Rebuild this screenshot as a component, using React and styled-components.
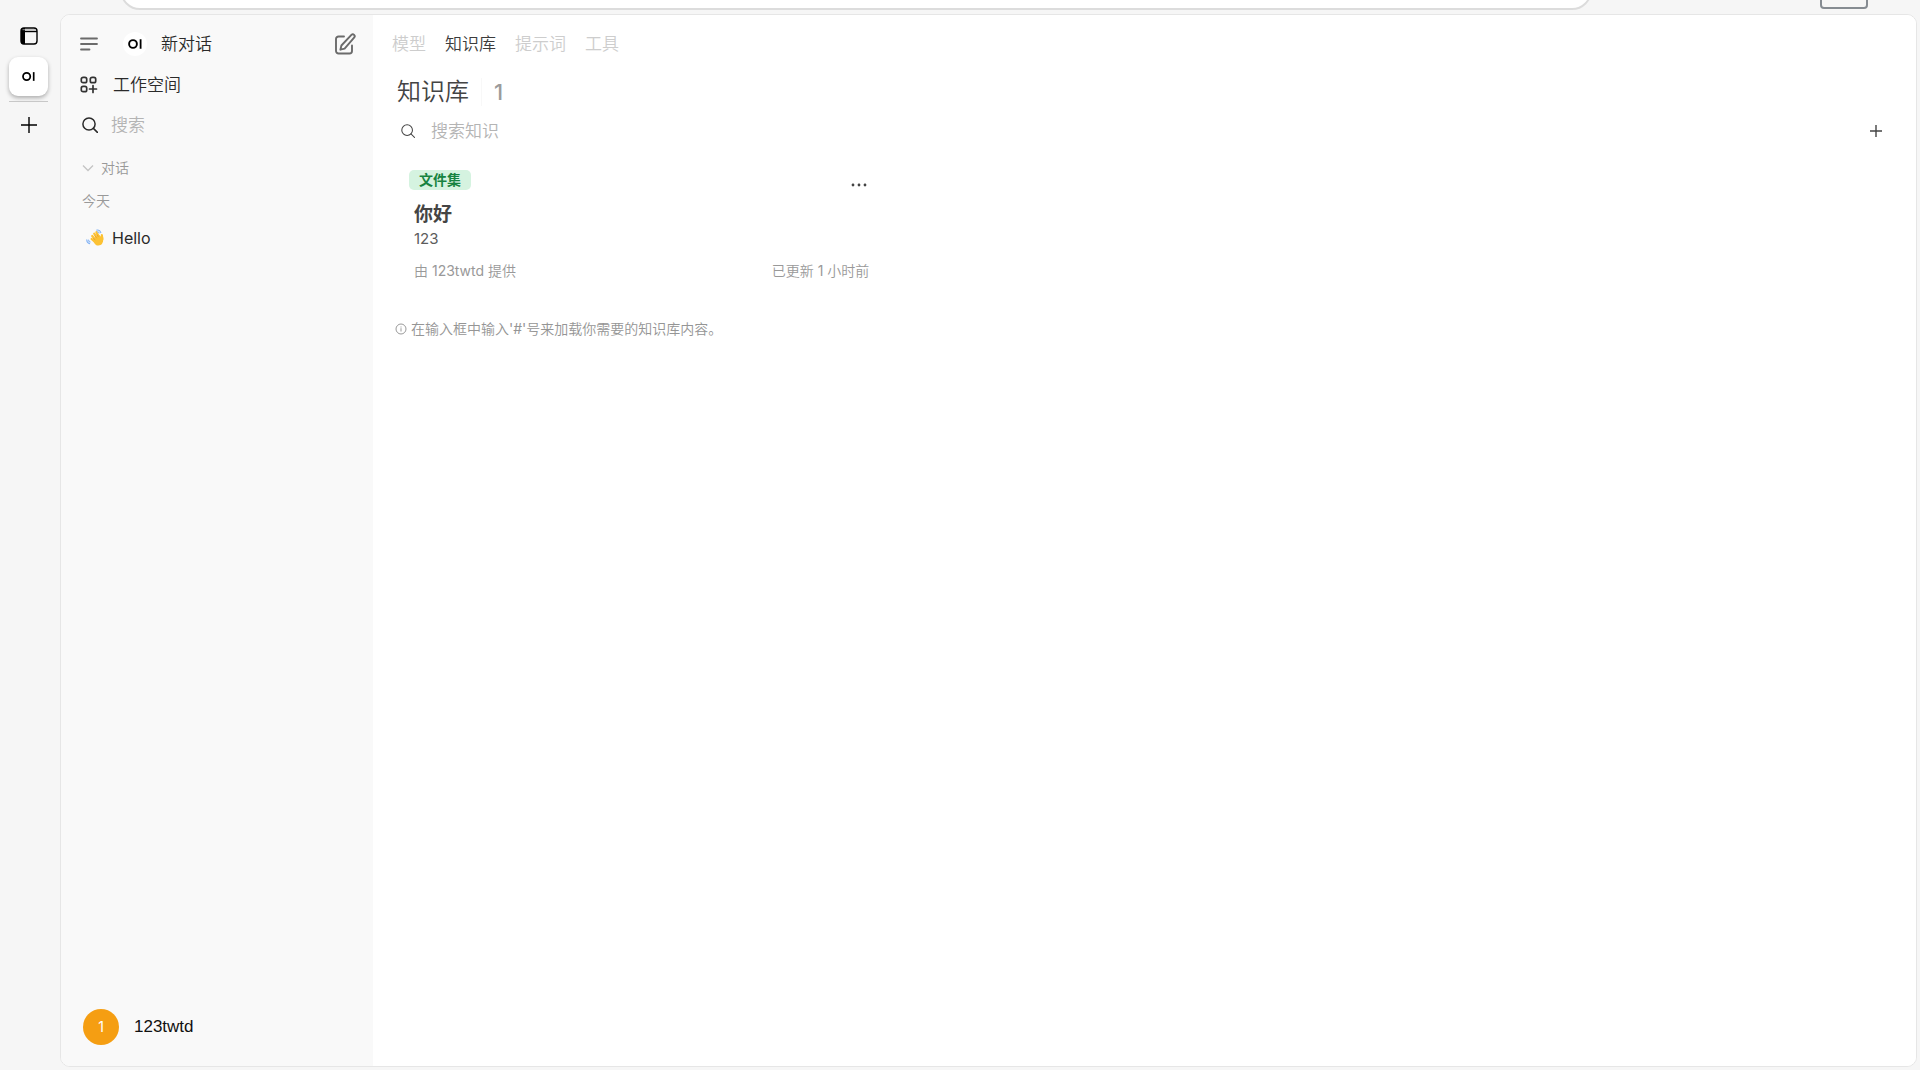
import React from "react";
import styled, { createGlobalStyle } from "styled-components";

const tabs = ["模型", "知识库", "提示词", "工具"];

const collections = [
    {
        type: "文件集",
        name: "你好",
        description: "123",
        owner: "由 123twtd 提供",
        updated: "已更新 1 小时前",
    },
];

function PanelIcon() {
    return (
        <Svg width="18" height="18" viewBox="0 0 18 18">
            <rect x="1" y="1" width="16" height="16" rx="3" stroke="#000" strokeWidth="1.4" fill="none" />
            <path d="M1 4a3 3 0 0 1 3-3h1v16H4a3 3 0 0 1-3-3z" fill="#000" />
            <path d="M4 4.5h13" stroke="#000" strokeWidth="1.4" />
            <path d="M2.5 2.7h13" stroke="#aaa" strokeWidth=".8" />
        </Svg>
    );
}

function PlusIcon({ size, weight }) {
    const mid = size / 2;
    return (
        <Svg width={size} height={size} viewBox={`0 0 ${size} ${size}`}>
            <path d={`M${mid} 0v${size}M0 ${mid}h${size}`} stroke="currentColor" strokeWidth={weight} />
        </Svg>
    );
}

function SearchIcon({ size, weight }) {
    return (
        <Svg width={size} height={size} viewBox="0 0 16 16">
            <circle cx="7" cy="7" r="6.1" fill="none" stroke="currentColor" strokeWidth={weight} />
            <path d="M11.4 11.4l4 4" stroke="currentColor" strokeWidth={weight} strokeLinecap="round" />
        </Svg>
    );
}

function WaveIcon() {
    return (
        <Svg width="18" height="18" viewBox="0 0 18 18">
            <g stroke="#fcc234" strokeLinecap="round">
                <path d="M8.2 4.6l3.4 5M6.2 7l4 4.6M10.4 3.2l3 5.4M5.6 10l4 3.4" strokeWidth="2.2" />
                <path d="M15.8 6.2l.6 4" strokeWidth="2.2" />
            </g>
            <path d="M7.6 9.6l5.4-3.6 1.8 1.6 2-1.4c.6 3 .8 6-.6 8.4-1.6 2.4-4.8 2.6-6.8.8-1.4-1.2-2.4-3-1.8-5.8z" fill="#fcc234" />
            <path d="M8.7 6.6l2 2.6M7.3 9l2 2.2M10.8 5.3l1.6 2.5" stroke="#e2962b" strokeWidth=".7" fill="none" />
            <path d="M10.8 1.1q3-.4 4 2.6M11.4 2.7q1.3 0 1.7 1.2M.8 10.8q-.2 3 2.8 3.8M2.6 11q0 1.6 1.5 2" stroke="#83b3f5" strokeWidth="1.1" fill="none" strokeLinecap="round" />
        </Svg>
    );
}

function OiMark({ size }) {
    return (
        <Svg width={size} height={size} viewBox="0 0 14 14">
            <circle cx="5" cy="7" r="3.9" fill="none" stroke="#000" strokeWidth="1.9" />
            <path d="M12.6 2.3v9.4" stroke="#000" strokeWidth="1.8" />
        </Svg>
    );
}

function Sidebar() {
    return (
        <SidebarBox>
            <TopRow>
                <IconButton aria-label="菜单">
                    <Svg width="18" height="14" viewBox="0 0 18 14">
                        <path d="M1 1.5h16M1 7h16M1 12.5h8.5" stroke="#6b6b6b" strokeWidth="1.8" strokeLinecap="round" />
                    </Svg>
                </IconButton>
                <NewChat href="#new">
                    <Logo>
                        <OiMark size={14} />
                    </Logo>
                    新对话
                </NewChat>
                <IconButton aria-label="编辑">
                    <Svg width="24" height="24" viewBox="0 0 24 24" stroke="#6b6b6b" strokeWidth="1.9" fill="none" strokeLinejoin="round" strokeLinecap="round">
                        <path d="M11 4.5H5.5A2.5 2.5 0 0 0 3 7v12a2.5 2.5 0 0 0 2.5 2.5h11A2.5 2.5 0 0 0 19 19v-5.5" />
                        <path d="M18.4 2.9a1.9 1.9 0 0 1 2.7 2.7L11.6 16.6l-4.2 1.1 1-4.2z" />
                    </Svg>
                </IconButton>
            </TopRow>
            <SideLink href="#workspace">
                <Svg width="18" height="18" viewBox="0 0 18 18" fill="none" stroke="#333" strokeWidth="1.7">
                    <rect x="1.3" y="1.3" width="5.4" height="5.4" rx="1.8" />
                    <rect x="10.3" y="1.3" width="5.4" height="5.4" rx="1.8" />
                    <rect x="1.3" y="10.3" width="5.4" height="5.4" rx="1.8" />
                    <path d="M13 9.5v7M9.5 13h7" strokeLinecap="round" />
                </Svg>
                工作空间
            </SideLink>
            <SideSearch>
                <SearchIcon size={16} weight={1.5} />
                <SearchInput type="text" placeholder="搜索" aria-label="搜索" />
            </SideSearch>
            <GroupToggle>
                <Svg width="12" height="8" viewBox="0 0 12 8">
                    <path d="M1 1.5l5 5 5-5" stroke="#c4c4c4" strokeWidth="1.3" fill="none" />
                </Svg>
                对话
            </GroupToggle>
            <DayLabel>今天</DayLabel>
            <ChatLink href="#hello">
                <WaveIcon />
                Hello
            </ChatLink>
            <UserButton>
                <Avatar>1</Avatar>
                123twtd
            </UserButton>
        </SidebarBox>
    );
}

function Knowledge() {
    return (
        <Main>
            <Tabs>
                {tabs.map((tab) => (
                    <Tab key={tab} href={"#" + tab} $active={tab === "知识库"}>
                        {tab}
                    </Tab>
                ))}
            </Tabs>
            <Heading>
                <Title>知识库</Title>
                <Divider />
                <Count>1</Count>
            </Heading>
            <SearchRow>
                <SearchIcon size={14} weight={1.2} />
                <SearchInput type="text" placeholder="搜索知识" aria-label="搜索知识" />
                <IconButton aria-label="新建知识库">
                    <PlusIcon size={12} weight={1.4} />
                </IconButton>
            </SearchRow>
            <Grid>
                {collections.map((item) => (
                    <Card key={item.name}>
                        <CardTop>
                            <Badge>{item.type}</Badge>
                            <IconButton aria-label="更多">
                                <Svg width="18" height="4" viewBox="0 0 18 4" fill="#444">
                                    <circle cx="2" cy="2" r="1.4" />
                                    <circle cx="8" cy="2" r="1.4" />
                                    <circle cx="14" cy="2" r="1.4" />
                                </Svg>
                            </IconButton>
                        </CardTop>
                        <CardName>{item.name}</CardName>
                        <CardText>{item.description}</CardText>
                        <CardFooter>
                            <span>{item.owner}</span>
                            <span>{item.updated}</span>
                        </CardFooter>
                    </Card>
                ))}
            </Grid>
            <Hint>
                <Svg width="12" height="12" viewBox="0 0 12 12" stroke="#999" fill="none">
                    <circle cx="6" cy="6" r="5" />
                    <path d="M6 3.5v1M6 5.2v3.3" />
                </Svg>
                在输入框中输入'#'号来加载你需要的知识库内容。
            </Hint>
        </Main>
    );
}

function App() {
    return (
        <Page>
            <GlobalStyle />
            <BrowserBar>
                <AddressBar />
                <WindowBox />
            </BrowserBar>
            <Body>
                <Rail>
                    <IconButton aria-label="侧边栏">
                        <PanelIcon />
                    </IconButton>
                    <AppTile aria-label="OI">
                        <OiMark size={13} />
                    </AppTile>
                    <RailLine />
                    <IconButton aria-label="添加">
                        <PlusIcon size={16} weight={1.4} />
                    </IconButton>
                </Rail>
                <Frame>
                    <Sidebar />
                    <Knowledge />
                </Frame>
            </Body>
        </Page>
    );
}
export default App;

const GlobalStyle = createGlobalStyle`
    * {
        box-sizing: border-box;
    }
    body {
        margin: 0;
        background: #f6f6f6;
        font-family: Inter, "Noto Sans CJK SC DemiLight", "Noto Sans CJK SC", sans-serif;
        color: #2a2a2a;
    }
    a {
        color: inherit;
        text-decoration: none;
    }
    button {
        border: 0;
        padding: 0;
        background: none;
        font: inherit;
        color: inherit;
        cursor: pointer;
    }
`;
const Page = styled.div`
    display: flex;
    flex-direction: column;
    height: 100vh;
`;
const Svg = styled.svg`
    display: block;
    flex-shrink: 0;
`;
const BrowserBar = styled.div`
    display: flex;
    justify-content: space-between;
    height: 14px;
    padding: 0 52px 0 120px;
    overflow: hidden;
`;
const AddressBar = styled.div`
    align-self: flex-end;
    flex-shrink: 0;
    width: calc(100% - 276px);
    height: 40px;
    margin-bottom: 4px;
    border: 2px solid #dcdcdc;
    border-radius: 20px;
    background: #fff;
`;
const WindowBox = styled.div`
    align-self: flex-end;
    width: 48px;
    height: 24px;
    margin-bottom: 5px;
    border: 2px solid #868c92;
    border-radius: 4px;
`;
const Body = styled.div`
    display: flex;
    flex: 1;
    min-height: 0;
    padding: 0 3px 3px 0;
`;
const Rail = styled.nav`
    display: flex;
    flex-direction: column;
    align-items: center;
    width: 60px;
    padding: 13px 3px 0 0;
    color: #000;
`;
const IconButton = styled.button`
    display: flex;
    align-items: center;
    justify-content: center;
`;
const AppTile = styled.button`
    display: flex;
    align-items: center;
    justify-content: center;
    width: 39px;
    height: 39px;
    margin-top: 12px;
    border-radius: 9px;
    background: #fff;
    box-shadow: 0 2px 4px rgba(0, 0, 0, 0.3);
`;
const RailLine = styled.div`
    width: 39px;
    height: 1px;
    margin: 5px 0 15px;
    background: #c8c8c8;
`;
const Frame = styled.div`
    display: flex;
    flex: 1;
    border: 1px solid #e6e6e6;
    border-radius: 10px;
    background: #fff;
    overflow: hidden;
`;
const SidebarBox = styled.aside`
    display: flex;
    flex-direction: column;
    align-items: stretch;
    width: 312px;
    padding: 17px 16px 21px 19px;
    background: #f9f9f9;
`;
const TopRow = styled.div`
    display: flex;
    align-items: center;
    height: 24px;
`;
const NewChat = styled.a`
    display: flex;
    flex: 1;
    align-items: center;
    gap: 14px;
    margin-left: 25px;
    font-size: 17px;
    line-height: 24px;
`;
const Logo = styled.span`
    display: flex;
    align-items: center;
    justify-content: center;
    width: 24px;
    height: 24px;
    border-radius: 50%;
    background: #fff;
`;
const SideLink = styled.a`
    display: flex;
    align-items: center;
    gap: 15px;
    margin-top: 17px;
    font-size: 17px;
    line-height: 24px;
`;
const SideSearch = styled.label`
    display: flex;
    align-items: center;
    gap: 13px;
    height: 24px;
    margin: 16px 0 0 2px;
`;
const SearchInput = styled.input`
    flex: 1;
    min-width: 0;
    padding: 0;
    border: 0;
    outline: 0;
    background: none;
    font-family: inherit;
    font-size: 17px;
    line-height: 24px;
    &::placeholder {
        color: #b4b4b4;
    }
`;
const GroupToggle = styled.button`
    display: flex;
    align-items: center;
    gap: 7px;
    margin: 21px 0 0 2px;
    font-size: 14px;
    line-height: 20px;
    color: #999;
`;
const DayLabel = styled.div`
    margin: 13px 0 0 2px;
    font-size: 14px;
    line-height: 20px;
    color: #999;
`;
const ChatLink = styled.a`
    display: flex;
    align-items: center;
    gap: 8px;
    margin: 15px 0 0 6px;
    font-size: 16px;
    line-height: 24px;
`;
const UserButton = styled.button`
    display: flex;
    align-items: center;
    gap: 15px;
    margin: auto 0 0 3px;
    font-family: "Liberation Sans", sans-serif;
    font-size: 17px;
    line-height: 24px;
    color: #111;
`;
const Avatar = styled.span`
    display: flex;
    align-items: center;
    justify-content: center;
    width: 36px;
    height: 36px;
    border-radius: 50%;
    background: #f59e12;
    font-family: Inter, sans-serif;
    font-size: 14px;
    color: #fff;
`;
const Main = styled.main`
    flex: 1;
    min-width: 0;
    padding: 17px 19px 0 24px;
    background: #fff;
    color: #444;
`;
const Tabs = styled.nav`
    display: flex;
    gap: 19px;
    margin-left: -5px;
    font-size: 17px;
    line-height: 24px;
`;
const Tab = styled.a`
    color: ${(props) => (props.$active ? "#3c3c3c" : "#cdcdcd")};
`;
const Heading = styled.div`
    display: flex;
    align-items: center;
    margin-top: 20px;
`;
const Title = styled.h1`
    margin: 0;
    font-size: 24px;
    line-height: 32px;
    font-weight: 400;
`;
const Divider = styled.div`
    width: 1px;
    height: 28px;
    margin: 0 12px;
    background: #f8f8f8;
`;
const Count = styled.span`
    font-size: 22px;
    line-height: 32px;
    font-weight: 500;
    color: #9b9b9b;
`;
const SearchRow = styled.div`
    display: flex;
    align-items: center;
    gap: 16px;
    height: 24px;
    margin-top: 11px;
    padding: 0 15px 0 4px;
`;
const Grid = styled.div`
    display: grid;
    grid-template-columns: repeat(3, 1fr);
    gap: 16px;
    margin-top: 27px;
`;
const Card = styled.article`
    padding: 0 17px;
`;
const CardTop = styled.div`
    display: flex;
    justify-content: space-between;
    height: 30px;
    margin-left: -5px;
`;
const Badge = styled.span`
    height: 20px;
    padding: 0 10px;
    border-radius: 5px;
    background: #d5f3e0;
    font-family: Inter, "Noto Sans CJK SC", sans-serif;
    font-size: 14px;
    line-height: 20px;
    font-weight: 700;
    color: #178341;
`;
const CardName = styled.h2`
    margin: 0;
    font-family: Inter, "Noto Sans CJK SC", sans-serif;
    font-size: 19px;
    line-height: 30px;
    font-weight: 700;
`;
const CardText = styled.p`
    margin: 0;
    font-size: 15px;
    line-height: 18px;
    color: #5c5c5c;
`;
const CardFooter = styled.div`
    display: flex;
    justify-content: space-between;
    margin-top: 13px;
    font-size: 14px;
    line-height: 20px;
    color: #999;
`;
const Hint = styled.div`
    display: flex;
    align-items: center;
    gap: 4px;
    margin-top: 38px;
    margin-left: -2px;
    font-size: 14px;
    line-height: 20px;
    color: #959595;
`;
